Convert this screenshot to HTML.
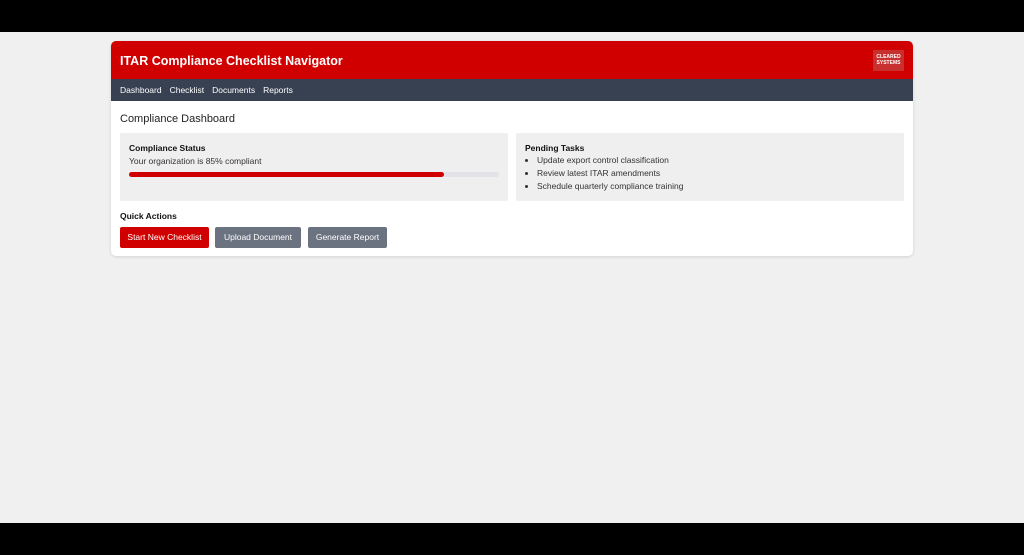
<!DOCTYPE html>
<html><head><style>
*{margin:0;padding:0;box-sizing:border-box}
body{width:1024px;height:555px;background:#000;font-family:"Liberation Sans",sans-serif;position:relative;overflow:hidden}
.bg{position:absolute;top:32px;left:0;width:1024px;height:491px;background:#f0f0f0}
.card{position:absolute;left:111px;top:41px;width:802px;height:215px;background:#fff;border-radius:5px;overflow:hidden;box-shadow:0 1px 3px rgba(0,0,0,.12)}
.hd{height:38px;background:#d10000;color:#fff;font-weight:bold;font-size:12.5px;padding:13px 0 0 9px;position:relative}
.logo{position:absolute;left:762px;top:9px;width:31px;height:21px;background:#c7302f;color:#fff;font-size:5px;line-height:6px;text-align:center;padding-top:4px;font-weight:bold}
.nav{height:22px;background:#374151;color:#fff;font-size:8.5px;padding:6px 0 0 9px}
.nav span{margin-right:8px}
h2{position:absolute;left:9px;top:72px;font-size:11px;font-weight:normal;color:#222}
.p{position:absolute;top:92px;height:68px;background:#efefef;border-radius:2px;font-size:8.5px;color:#333;padding:10px 9px}
.p b{color:#111;display:block;margin-bottom:3px}
.bar{margin-top:6px;height:5px;background:#e2e2e8;border-radius:3px}
.bar div{width:85%;height:5px;background:#d10000;border-radius:3px}
ul{padding-left:12px;line-height:13px;margin-top:-2px}
.qa{position:absolute;left:9px;top:170px;font-size:8.5px;font-weight:bold;color:#111}
.btn{position:absolute;top:186px;height:21px;color:#fff;font-size:8.5px;text-align:center;line-height:21px;border-radius:2px}
</style></head><body>
<div class="bg"></div>
<div class="card">
<div class="hd">ITAR Compliance Checklist Navigator<div class="logo">CLEARED<br>SYSTEMS</div></div>
<div class="nav"><span>Dashboard</span><span>Checklist</span><span>Documents</span><span>Reports</span></div>
<h2>Compliance Dashboard</h2>
<div class="p" style="left:9px;width:388px"><b>Compliance Status</b>Your organization is 85% compliant<div class="bar"><div></div></div></div>
<div class="p" style="left:405px;width:388px"><b>Pending Tasks</b><ul><li>Update export control classification</li><li>Review latest ITAR amendments</li><li>Schedule quarterly compliance training</li></ul></div>
<div class="qa">Quick Actions</div>
<div class="btn" style="left:9px;width:89px;background:#d10000">Start New Checklist</div>
<div class="btn" style="left:104px;width:86px;background:#6b7280">Upload Document</div>
<div class="btn" style="left:197px;width:79px;background:#6b7280">Generate Report</div>
</div>
</body></html>
